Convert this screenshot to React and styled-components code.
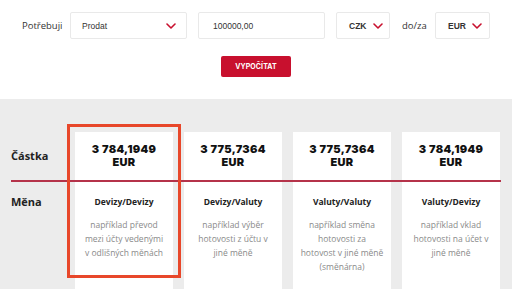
import React from "react";
import styled, { createGlobalStyle } from "styled-components";

const Global = createGlobalStyle`
  html, body { margin: 0; padding: 0; background: #fff; }
  body { font-family: "Open Sans", "Liberation Sans", sans-serif; overflow: hidden; }
  * { box-sizing: border-box; }
`;

const Page = styled.div`
  width: 512px;
  height: 289px;
  display: flex;
  flex-direction: column;
  overflow: hidden;
`;

const Top = styled.div`
  flex-shrink: 0;
  height: 99px;
  padding-top: 12px;
  display: flex;
  flex-direction: column;
  align-items: center;
`;

const FormRow = styled.div`
  align-self: stretch;
  display: flex;
  align-items: center;
  padding-left: 22px;
  height: 27px;
`;

const Label = styled.span`
  width: ${(p) => p.$w}px;
  font-size: 9.5px;
  color: #333;
  white-space: nowrap;
  margin-right: ${(p) => p.$gap}px;
  margin-left: ${(p) => p.$left || 0}px;
`;

const Field = styled.div`
  width: ${(p) => p.$w}px;
  height: 27px;
  flex-shrink: 0;
  margin-right: ${(p) => p.$gap || 0}px;
  border: 1px solid #e9e9e9;
  border-radius: 2px;
  background: #fff;
  display: flex;
  align-items: center;
  justify-content: space-between;
  padding: 0 ${(p) => p.$pr || 12}px 0 ${(p) => p.$pl || 12}px;
  font-family: "Liberation Sans", Arial, sans-serif;
  font-size: 8.5px;
  font-weight: ${(p) => (p.$bold ? 700 : 400)};
  color: #333;
`;

const Chevron = () => (
  <svg width="10" height="6" viewBox="0 0 10 6">
    <path d="M1 1l4 4 4-4" fill="none" stroke="#c8102e" strokeWidth="1.6" strokeLinecap="round" strokeLinejoin="round" />
  </svg>
);

const Button = styled.button`
  margin-top: 17px;
  width: 70px;
  height: 21px;
  border: none;
  border-radius: 2px;
  background: #c8102e;
  color: #fff;
  font-family: "Inter", sans-serif;
  font-weight: 700;
  font-size: 7px;
  letter-spacing: 0.1px;
  padding: 0;
`;

const Bottom = styled.div`
  flex: 1;
  min-height: 0;
  overflow: hidden;
  background: #ececec;
  padding-top: 33px;
  position: relative;
`;

const Row = styled.div`
  display: grid;
  grid-template-columns: 64px repeat(4, 98px);
  column-gap: 11px;
  height: ${(p) => p.$h || "auto"};
`;

const RowLabel = styled.div`
  padding-left: 11px;
  font-size: 11px;
  font-weight: 700;
  color: #222;
  display: flex;
  align-items: ${(p) => (p.$top ? "flex-start" : "center")};
  padding-top: ${(p) => (p.$top ? "13px" : "0")};
  line-height: 14px;
`;

const AmountCell = styled.div`
  background: #fff;
  display: flex;
  align-items: center;
  justify-content: center;
  text-align: center;
  font-family: "Inter", sans-serif;
  font-weight: 900;
  font-size: 11px;
  letter-spacing: 0.3px;
  line-height: 13px;
  color: #111;
`;

const Separator = styled.div`
  margin-left: 11px;
  width: 490px;
  height: 2px;
  background: #b5334a;
`;

const TypeCell = styled.div`
  background: #fff;
  height: 110px;
  padding-top: 13px;
  text-align: center;
`;

const TypeTitle = styled.div`
  font-size: 8.5px;
  font-weight: 700;
  color: #222;
  line-height: 14px;
`;

const TypeDesc = styled.div`
  margin-top: 9px;
  font-size: 8.5px;
  line-height: 14px;
  color: #8a8a8a;
  padding: 0 6px;
`;

const Highlight = styled.div`
  position: absolute;
  left: 67px;
  top: 25px;
  width: 114px;
  height: 154px;
  border: 3px solid #e8472a;
  pointer-events: none;
`;

const cols = [
  { amount: "3 784,1949", title: "Devizy/Devizy", desc: ["například převod", "mezi účty vedenými", "v odlišných měnách"] },
  { amount: "3 775,7364", title: "Devizy/Valuty", desc: ["například výběr", "hotovosti z účtu v", "jiné měně"] },
  { amount: "3 775,7364", title: "Valuty/Valuty", desc: ["například směna", "hotovosti za", "hotovost v jiné měně", "(směnárna)"] },
  { amount: "3 784,1949", title: "Valuty/Devizy", desc: ["například vklad", "hotovosti na účet v", "jiné měně"] },
];

export default function App() {
  return (
    <>
      <Global />
      <Page>
        <Top>
          <FormRow>
            <Label $w={37} $gap={11}>Potřebuji</Label>
            <Field $w={117} $gap={11} $pr={10} $pl={11}>
              Prodat <Chevron />
            </Field>
            <Field $w={127} $gap={11} $pl={14}>
              100000,00
            </Field>
            <Field $w={54} $gap={0} $bold $pr={6} $pl={12}>
              CZK <Chevron />
            </Field>
            <Label $w={22} $gap={11} $left={12}>do/za</Label>
            <Field $w={55} $bold $pr={7} $pl={12}>
              EUR <Chevron />
            </Field>
          </FormRow>
          <Button>VYPOČÍTAT</Button>
        </Top>
        <Bottom>
          <Row $h="48px">
            <RowLabel>Částka</RowLabel>
            {cols.map((c, i) => (
              <AmountCell key={i}>
                {c.amount}
                <br />
                EUR
              </AmountCell>
            ))}
          </Row>
          <Separator />
          <Row>
            <RowLabel $top>Měna</RowLabel>
            {cols.map((c, i) => (
              <TypeCell key={i}>
                <TypeTitle>{c.title}</TypeTitle>
                <TypeDesc>
                  {c.desc.map((d, j) => (
                    <div key={j}>{d}</div>
                  ))}
                </TypeDesc>
              </TypeCell>
            ))}
          </Row>
          <Highlight />
        </Bottom>
      </Page>
    </>
  );
}
